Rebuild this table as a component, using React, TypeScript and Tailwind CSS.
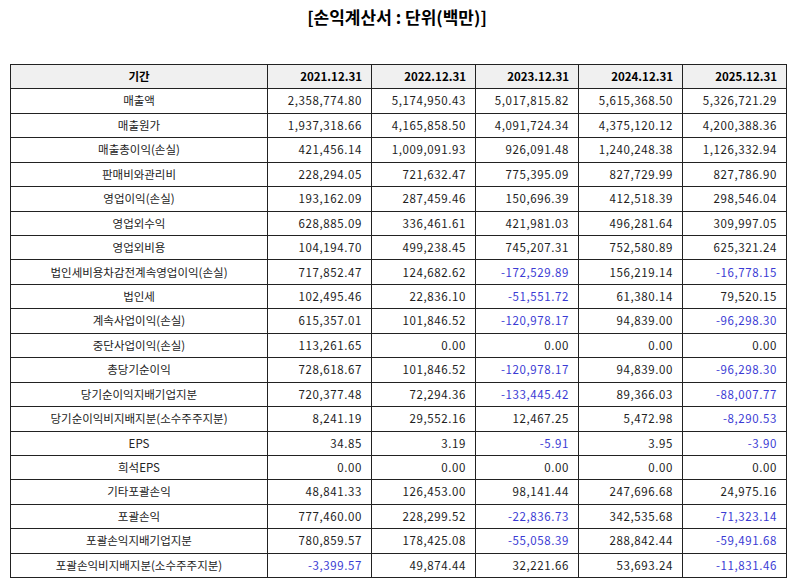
const years = ['2021.12.31', '2022.12.31', '2023.12.31', '2024.12.31', '2025.12.31'];

const rows: { label: string; values: string[] }[] = [
  { label: '매출액', values: ['2,358,774.80', '5,174,950.43', '5,017,815.82', '5,615,368.50', '5,326,721.29'] },
  { label: '매출원가', values: ['1,937,318.66', '4,165,858.50', '4,091,724.34', '4,375,120.12', '4,200,388.36'] },
  { label: '매출총이익(손실)', values: ['421,456.14', '1,009,091.93', '926,091.48', '1,240,248.38', '1,126,332.94'] },
  { label: '판매비와관리비', values: ['228,294.05', '721,632.47', '775,395.09', '827,729.99', '827,786.90'] },
  { label: '영업이익(손실)', values: ['193,162.09', '287,459.46', '150,696.39', '412,518.39', '298,546.04'] },
  { label: '영업외수익', values: ['628,885.09', '336,461.61', '421,981.03', '496,281.64', '309,997.05'] },
  { label: '영업외비용', values: ['104,194.70', '499,238.45', '745,207.31', '752,580.89', '625,321.24'] },
  { label: '법인세비용차감전계속영업이익(손실)', values: ['717,852.47', '124,682.62', '-172,529.89', '156,219.14', '-16,778.15'] },
  { label: '법인세', values: ['102,495.46', '22,836.10', '-51,551.72', '61,380.14', '79,520.15'] },
  { label: '계속사업이익(손실)', values: ['615,357.01', '101,846.52', '-120,978.17', '94,839.00', '-96,298.30'] },
  { label: '중단사업이익(손실)', values: ['113,261.65', '0.00', '0.00', '0.00', '0.00'] },
  { label: '총당기순이익', values: ['728,618.67', '101,846.52', '-120,978.17', '94,839.00', '-96,298.30'] },
  { label: '당기순이익지배기업지분', values: ['720,377.48', '72,294.36', '-133,445.42', '89,366.03', '-88,007.77'] },
  { label: '당기순이익비지배지분(소수주주지분)', values: ['8,241.19', '29,552.16', '12,467.25', '5,472.98', '-8,290.53'] },
  { label: 'EPS', values: ['34.85', '3.19', '-5.91', '3.95', '-3.90'] },
  { label: '희석EPS', values: ['0.00', '0.00', '0.00', '0.00', '0.00'] },
  { label: '기타포괄손익', values: ['48,841.33', '126,453.00', '98,141.44', '247,696.68', '24,975.16'] },
  { label: '포괄손익', values: ['777,460.00', '228,299.52', '-22,836.73', '342,535.68', '-71,323.14'] },
  { label: '포괄손익지배기업지분', values: ['780,859.57', '178,425.08', '-55,058.39', '288,842.44', '-59,491.68'] },
  { label: '포괄손익비지배지분(소수주주지분)', values: ['-3,399.57', '49,874.44', '32,221.66', '53,693.24', '-11,831.46'] },
];

export default function App() {
  return (
    <div
      className="w-[794px] h-[586px] bg-white text-[#222]"
      style={{ fontFamily: '"Noto Sans CJK KR", "Noto Sans", sans-serif' }}
    >
      <h1 className="pt-[5px] h-[64px] text-center text-[17px] font-bold text-black leading-[24px]">
        [손익계산서 : 단위(백만)]
      </h1>
      <div className="px-[10px]">
        <table className="w-[776px] border-collapse table-fixed text-[11.5px]">
          <colgroup>
            <col className="w-[257px]" />
            <col className="w-[104px]" />
            <col className="w-[104px]" />
            <col className="w-[103px]" />
            <col className="w-[104px]" />
            <col className="w-[104px]" />
          </colgroup>
          <thead>
            <tr className="h-[24.4px] bg-[#f0f0f0]">
              <th className="border border-[#222] p-0 text-center font-bold text-black">기간</th>
              {years.map((y) => (
                <th key={y} className="border border-[#222] p-0 pr-[9px] text-right font-bold text-black">
                  {y}
                </th>
              ))}
            </tr>
          </thead>
          <tbody>
            {rows.map((row) => (
              <tr key={row.label} className="h-[24.45px]">
                <td className="border border-[#222] p-0 text-center">{row.label}</td>
                {row.values.map((v, i) => (
                  <td
                    key={i}
                    className={
                      v.startsWith('-')
                        ? 'border border-[#222] p-0 pr-[9px] text-right tracking-[0.6px] text-[#3b3bd4]'
                        : 'border border-[#222] p-0 pr-[9px] text-right tracking-[0.6px]'
                    }
                  >
                    {v}
                  </td>
                ))}
              </tr>
            ))}
          </tbody>
        </table>
      </div>
    </div>
  );
}
